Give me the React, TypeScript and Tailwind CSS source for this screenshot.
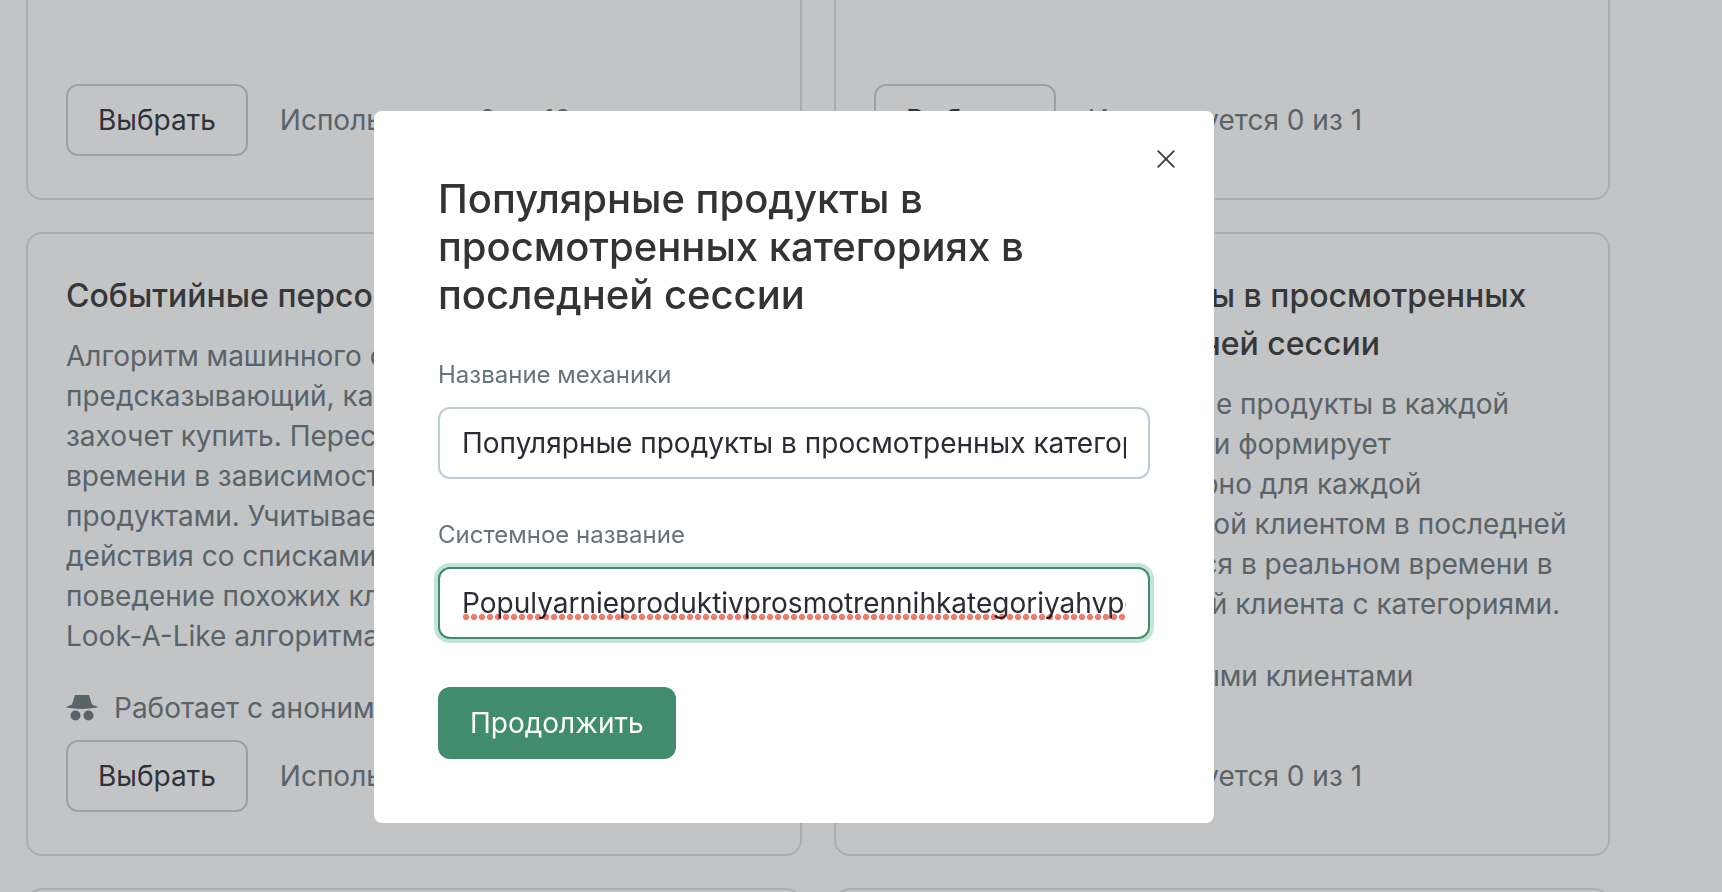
import React, { useState } from 'react';

interface Mechanic {
  id: string;
  title: string;
  description: string[];
  used: number;
  limit: number;
}

const mechanics: Mechanic[] = [
  {
    id: 'event-personal',
    title: 'Событийные персональные',
    description: [
      'Алгоритм машинного обучения,',
      'предсказывающий, какие продукты клиент',
      'захочет купить. Пересчитывается в реальном',
      'времени в зависимости от работы клиента с',
      'продуктами. Учитывает просмотры, заказы и',
      'действия со списками продуктов, а также',
      'поведение похожих клиентов с помощью',
      'Look-A-Like алгоритма.',
    ],
    used: 0,
    limit: 10,
  },
  {
    id: 'popular-in-categories',
    title: 'Популярные продукты в просмотренных категориях в последней сессии',
    description: [
      'Анализируем популярные продукты в каждой',
      'продуктовой категории, и формирует',
      'рейтинг товаров регулярно для каждой',
      'категории, просмотренной клиентом в последней',
      'сессии. Пересчитывается в реальном времени в',
      'зависимости от действий клиента с категориями.',
    ],
    used: 0,
    limit: 1,
  },
];

const IncognitoIcon: React.FC = () => (
  <svg width="32" height="26" viewBox="0 0 32 26" fill="currentColor" aria-hidden="true">
    <path d="M9 0h14l3 9.500l5.500 2.200c.6.3.4.8-.1.900C26 13.500 21 14 16 14S6 13.500.6 12.600C.1 12.500-.1 12 .5 11.700L6 9.500z" />
    <circle cx="9.500" cy="20.500" r="5" />
    <circle cx="22.500" cy="20.500" r="5" />
  </svg>
);

const CardFooter: React.FC<{ used: number; limit: number }> = ({ used, limit }) => (
  <div className="flex items-center gap-8">
    <button
      type="button"
      className="h-[72px] rounded-xl border-2 border-[#c0ccd3] px-[30px] text-[#2b2b33]"
    >
      Выбрать
    </button>
    <span>
      Используется {used} из {limit}
    </span>
  </div>
);

const MechanicCard: React.FC<{ mechanic: Mechanic }> = ({ mechanic }) => (
  <article className="flex flex-col rounded-2xl border-2 border-[#d7e1e8] px-[38px] pt-[38px] pb-[42px]">
    <h2 className="text-[32px] leading-[48px] font-medium text-[#333333]">{mechanic.title}</h2>
    <p className="mt-4">
      {mechanic.description.map((line) => (
        <span key={line} className="block whitespace-nowrap">
          {line}
        </span>
      ))}
    </p>
    <div className="mt-8 mb-3 flex items-center gap-4">
      <IncognitoIcon />
      <span>Работает с анонимными клиентами</span>
    </div>
    <div className="mt-auto">
      <CardFooter used={mechanic.used} limit={mechanic.limit} />
    </div>
  </article>
);

interface FieldProps {
  id: string;
  label: string;
  value: string;
  active?: boolean;
  misspelled?: boolean;
  onChange: (value: string) => void;
}

const Field: React.FC<FieldProps> = ({ id, label, value, active, misspelled, onChange }) => (
  <div className="mt-10">
    <label htmlFor={id} className="block text-2xl leading-8 text-[#66747a]">
      {label}
    </label>
    <div className="relative mt-4">
      <input
        id={id}
        type="text"
        spellCheck={false}
        value={value}
        onChange={(e) => onChange(e.target.value)}
        className={`h-[72px] w-full rounded-xl border-2 bg-white px-[22px] text-[28px] text-[#2b2b33] outline-none ${
          active ? 'border-[#408c6c] ring-4 ring-[#c2e5d8]' : 'border-[#c0ccd3]'
        }`}
      />
      {misspelled && (
        <span className="pointer-events-none absolute inset-x-6 bottom-[18px] h-2 bg-[radial-gradient(circle,#f3786d_2.7px,transparent_3.6px)] bg-[length:8px_8px] mix-blend-multiply" />
      )}
    </div>
  </div>
);

export default function App() {
  const [name, setName] = useState(
    'Популярные продукты в просмотренных категориях в последней сессии'
  );
  const [systemName, setSystemName] = useState(
    'Populyarnieproduktivprosmotrennihkategoriyahvposledneysessii'
  );

  return (
    <div className="h-screen overflow-hidden bg-white font-['Inter',sans-serif] text-[28px] leading-10 text-[#66747a]">
      <main className="grid grid-cols-2 gap-8 pr-28 pl-[26px]">
        {mechanics.map((m) => (
          <article
            key={m.id}
            className="rounded-b-2xl border-2 border-t-0 border-[#d7e1e8] px-[38px] pt-[84px] pb-[42px]"
          >
            <CardFooter used={m.used} limit={m.limit} />
          </article>
        ))}
        {mechanics.map((m) => (
          <MechanicCard key={m.id} mechanic={m} />
        ))}
        {mechanics.map((m) => (
          <article key={m.id} className="h-40 rounded-2xl border-2 border-[#d7e1e8]" />
        ))}
      </main>

      <div className="fixed inset-0 flex items-start justify-center bg-[#3d4047]/31 pt-[111px] pr-[134px]">
        <div
          role="dialog"
          aria-modal="true"
          aria-labelledby="dialog-title"
          className="relative w-full max-w-[840px] rounded-lg bg-white p-16"
        >
          <button
            type="button"
            aria-label="Закрыть"
            className="absolute top-8 right-8 flex size-8 items-center justify-center text-[#3a3b44]"
          >
            <svg width="18" height="18" viewBox="0 0 18 18" fill="none" stroke="currentColor" strokeWidth="1.8">
              <path d="M1.200 1.200l15.600 15.600M16.800 1.200L1.200 16.800" strokeLinecap="round" />
            </svg>
          </button>
          <h1 id="dialog-title" className="text-[40px] leading-[48px] font-medium text-[#333333]">
            Популярные продукты в просмотренных категориях в последней сессии
          </h1>
          <Field id="mechanic-name" label="Название механики" value={name} onChange={setName} />
          <Field
            id="system-name"
            label="Системное название"
            value={systemName}
            onChange={setSystemName}
            active
            misspelled
          />
          <button type="button" className="mt-12 block h-[72px] rounded-xl bg-[#408c6c] px-8 text-white">
            Продолжить
          </button>
        </div>
      </div>
    </div>
  );
}
